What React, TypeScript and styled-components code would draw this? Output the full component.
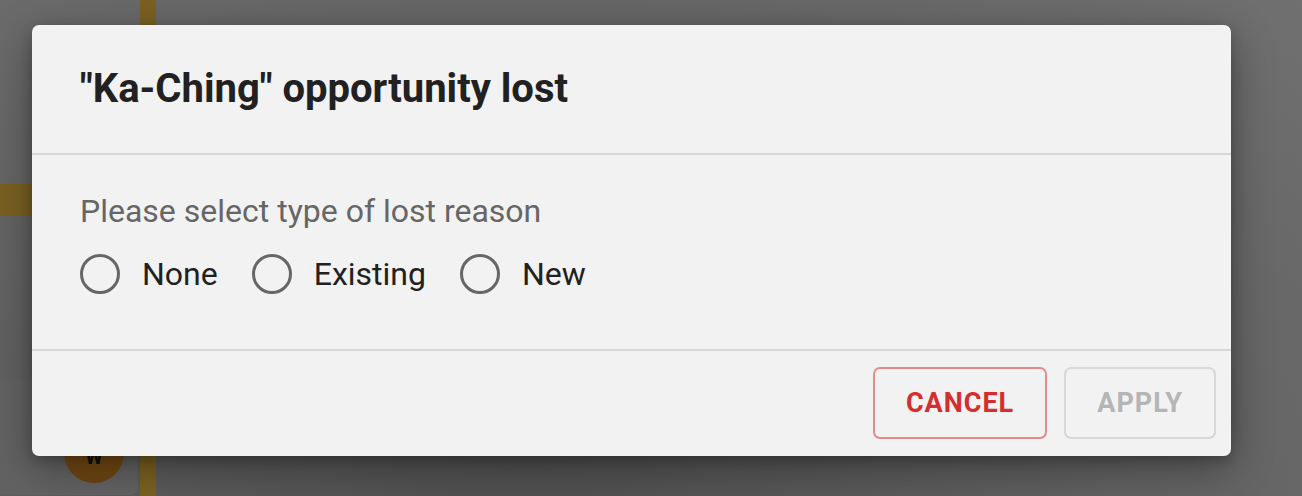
import React from 'react'
import styled, { createGlobalStyle } from 'styled-components'

const GlobalStyle = createGlobalStyle`
  html, body {
    margin: 0;
    padding: 0;
    width: 1302px;
    height: 496px;
    overflow: hidden;
    font-family: Roboto, "Liberation Sans", sans-serif;
  }
`

// Backdrop and the page behind it
const Stage = styled.div`
  position: relative;
  width: 1302px;
  height: 496px;
  overflow: hidden;
  background: radial-gradient(ellipse at 40% 110%, #4e4e4e 0%, #5e5e5e 45%, #707070 100%);
`

const Backdrop = styled.div`
  display: flex;
  padding: 25px 71px 40px 32px;
  height: 100%;
  box-sizing: border-box;
`

const Trace = styled.div<{ $x: number; $y: number; $w: number; $h: number }>`
  position: absolute;
  left: ${(p) => p.$x}px;
  top: ${(p) => p.$y}px;
  width: ${(p) => p.$w}px;
  height: ${(p) => p.$h}px;
  background: #7a6122;
`

const NodeCard = styled.div`
  position: absolute;
  left: -20px;
  top: 380px;
  width: 158px;
  height: 115px;
  border-radius: 8px;
  background: #626262;
`

const Avatar = styled.div`
  position: absolute;
  left: 64px;
  top: 423px;
  width: 60px;
  height: 60px;
  border-radius: 50%;
  background: linear-gradient(#8a5a16, #6a4212);
  color: #111;
  font-size: 20px;
  font-weight: 700;
  display: flex;
  align-items: center;
  justify-content: center;
  padding-top: 8px;
  box-sizing: border-box;
`

// Dialog
const Dialog = styled.div`
  position: relative;
  z-index: 1;
  flex: 1;
  height: 431px;
  background: #f2f2f2;
  border-radius: 7px;
  box-shadow: 0 12px 40px rgba(0, 0, 0, 0.35), 0 4px 12px rgba(0, 0, 0, 0.2);
  display: flex;
  flex-direction: column;
`

const Header = styled.div`
  height: 130px;
  box-sizing: border-box;
  padding: 0 48px 2px;
  display: flex;
  align-items: center;
  border-bottom: 2px solid #d6d6d6;
`

const Title = styled.h2`
  margin: 0;
  font-size: 40px;
  font-weight: 700;
  color: #212121;
`

const Body = styled.div`
  flex: 1;
  padding: 36px 48px 0;
  border-bottom: 2px solid #d6d6d6;
`

const Prompt = styled.div`
  font-size: 32px;
  color: #666;
  line-height: 40px;
`

const RadioGroup = styled.div`
  display: flex;
  gap: 34px;
  margin-top: 23px;
`

const RadioLabel = styled.label`
  display: flex;
  align-items: center;
  gap: 22px;
  font-size: 32px;
  color: #212121;
`

const RadioCircle = styled.span`
  width: 40px;
  height: 40px;
  box-sizing: border-box;
  border: 3px solid #666;
  border-radius: 50%;
`

const Footer = styled.div`
  height: 105px;
  box-sizing: border-box;
  padding: 16px 15px 17px;
  display: flex;
  justify-content: flex-end;
  gap: 17px;
`

const ActionButton = styled.button<{ $tone: 'danger' | 'disabled' }>`
  height: 72px;
  padding: 0 31px;
  border-radius: 7px;
  background: transparent;
  font-family: Roboto, "Liberation Sans", sans-serif;
  font-size: 27px;
  font-weight: 700;
  letter-spacing: 1px;
  border: 2px solid ${(p) => (p.$tone === 'danger' ? '#e58a8a' : '#d8d8d8')};
  color: ${(p) => (p.$tone === 'danger' ? '#d32f2f' : '#b5b5b5')};
`

const options = ['None', 'Existing', 'New']

const App: React.FC = () => {
  return (
    <Stage>
      <GlobalStyle />
      <NodeCard />
      <Trace $x={140} $y={0} $w={16} $h={496} />
      <Trace $x={0} $y={184} $w={40} $h={32} />
      <Avatar>W</Avatar>
      <Backdrop>
        <Dialog>
          <Header>
            <Title>"Ka-Ching" opportunity lost</Title>
          </Header>
          <Body>
            <Prompt>Please select type of lost reason</Prompt>
            <RadioGroup>
              {options.map((o) => (
                <RadioLabel key={o}>
                  <RadioCircle />
                  {o}
                </RadioLabel>
              ))}
            </RadioGroup>
          </Body>
          <Footer>
            <ActionButton $tone="danger">CANCEL</ActionButton>
            <ActionButton $tone="disabled">APPLY</ActionButton>
          </Footer>
        </Dialog>
      </Backdrop>
    </Stage>
  )
}

export default App
